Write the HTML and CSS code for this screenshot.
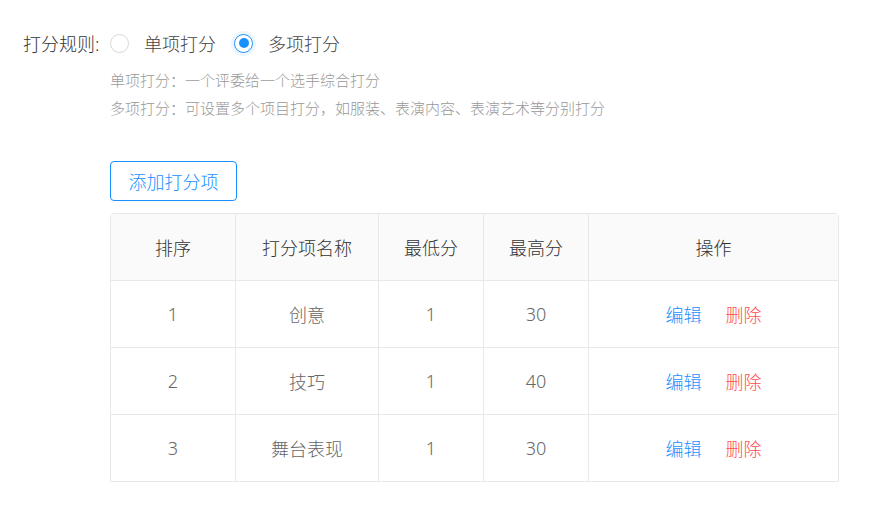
FILE: index.html
```html
<!DOCTYPE html>
<html lang="zh-CN">
<head>
  <meta charset="UTF-8" />
  <title>打分规则</title>
  <link rel="stylesheet" href="styles.css">
</head>
<body>
  <div class="page">
    <div class="rule-row">
      <span class="rule-label">打分规则:</span>
      <label class="radio"><span class="radio-dot"></span><span>单项打分</span></label>
      <label class="radio checked"><span class="radio-dot"></span><span>多项打分</span></label>
    </div>
    <div class="rule-body">
      <p class="tip">单项打分：一个评委给一个选手综合打分</p>
      <p class="tip">多项打分：可设置多个项目打分，如服装、表演内容、表演艺术等分别打分</p>

      <button class="add-btn">添加打分项</button>

      <table class="score-table">
        <thead>
          <tr>
            <th class="c-sort">排序</th>
            <th class="c-name">打分项名称</th>
            <th class="c-min">最低分</th>
            <th class="c-max">最高分</th>
            <th>操作</th>
          </tr>
        </thead>
        <tbody>
          <tr>
            <td>1</td><td>创意</td><td>1</td><td>30</td>
            <td><a class="link edit">编辑</a><a class="link del">删除</a></td>
          </tr>
          <tr>
            <td>2</td><td>技巧</td><td>1</td><td>40</td>
            <td><a class="link edit">编辑</a><a class="link del">删除</a></td>
          </tr>
          <tr>
            <td>3</td><td>舞台表现</td><td>1</td><td>30</td>
            <td><a class="link edit">编辑</a><a class="link del">删除</a></td>
          </tr>
        </tbody>
      </table>
    </div>
  </div>
</body>
</html>
```

FILE: styles.css
```css
body {
  margin: 0;
  background: #fff;
  font-family: "Noto Sans", "Noto Sans CJK SC", sans-serif;
  font-weight: 300;
  color: #333;
}
.page {
  padding: 27px 0 0 23px;
}
.rule-row {
  display: flex;
  align-items: center;
  height: 32px;
  font-size: 18px;
}
.rule-label {
  width: 87px;
  color: #333;
}
.radio {
  display: flex;
  align-items: center;
  margin-right: 18px;
  color: #444;
}
.radio-dot {
  width: 19px;
  height: 19px;
  box-sizing: border-box;
  border: 1px solid #d9d9d9;
  border-radius: 50%;
  margin-right: 15px;
  position: relative;
}
.checked .radio-dot {
  border-color: #1890ff;
  box-shadow: 0 0 0 3px rgba(24, 144, 255, 0.08);
}
.checked .radio-dot::after {
  content: "";
  position: absolute;
  left: 3.5px;
  top: 3.5px;
  width: 10px;
  height: 10px;
  border-radius: 50%;
  background: #1890ff;
}
.rule-body {
  padding-left: 87px;
}
.tip {
  margin: 0;
  font-size: 15px;
  line-height: 28px;
  color: #999;
}
.tip:first-child {
  margin-top: 7px;
}
.add-btn {
  margin-top: 39px;
  width: 127px;
  height: 40px;
  padding: 0;
  font-family: inherit;
  font-weight: 300;
  font-size: 18px;
  color: #1890ff;
  background: #fff;
  border: 1px solid #1890ff;
  border-radius: 4px;
  box-shadow: 0 2px 0 rgba(0, 0, 0, 0.015);
  cursor: pointer;
}
.score-table {
  margin-top: 12px;
  width: 729px;
  border-collapse: separate;
  border-spacing: 0;
  border: 1px solid #e8e8e8;
  border-radius: 4px 4px 0 0;
  font-size: 18px;
  text-align: center;
}
.score-table th,
.score-table td {
  height: 66px;
  padding: 0;
  border-right: 1px solid #e8e8e8;
  border-bottom: 1px solid #e8e8e8;
}
.score-table th:last-child,
.score-table td:last-child {
  border-right: none;
}
.score-table tbody tr:last-child td {
  border-bottom: none;
}
.score-table th {
  background: #fafafa;
  font-weight: 300;
  color: #333;
}
.score-table td {
  color: #666;
}
.c-sort { width: 124px; }
.c-name { width: 142px; }
.c-min { width: 104px; }
.c-max { width: 104px; }
.link {
  cursor: pointer;
  margin: 0 12px;
}
.edit { color: #1890ff; }
.del { color: #ff4d4f; }
```
